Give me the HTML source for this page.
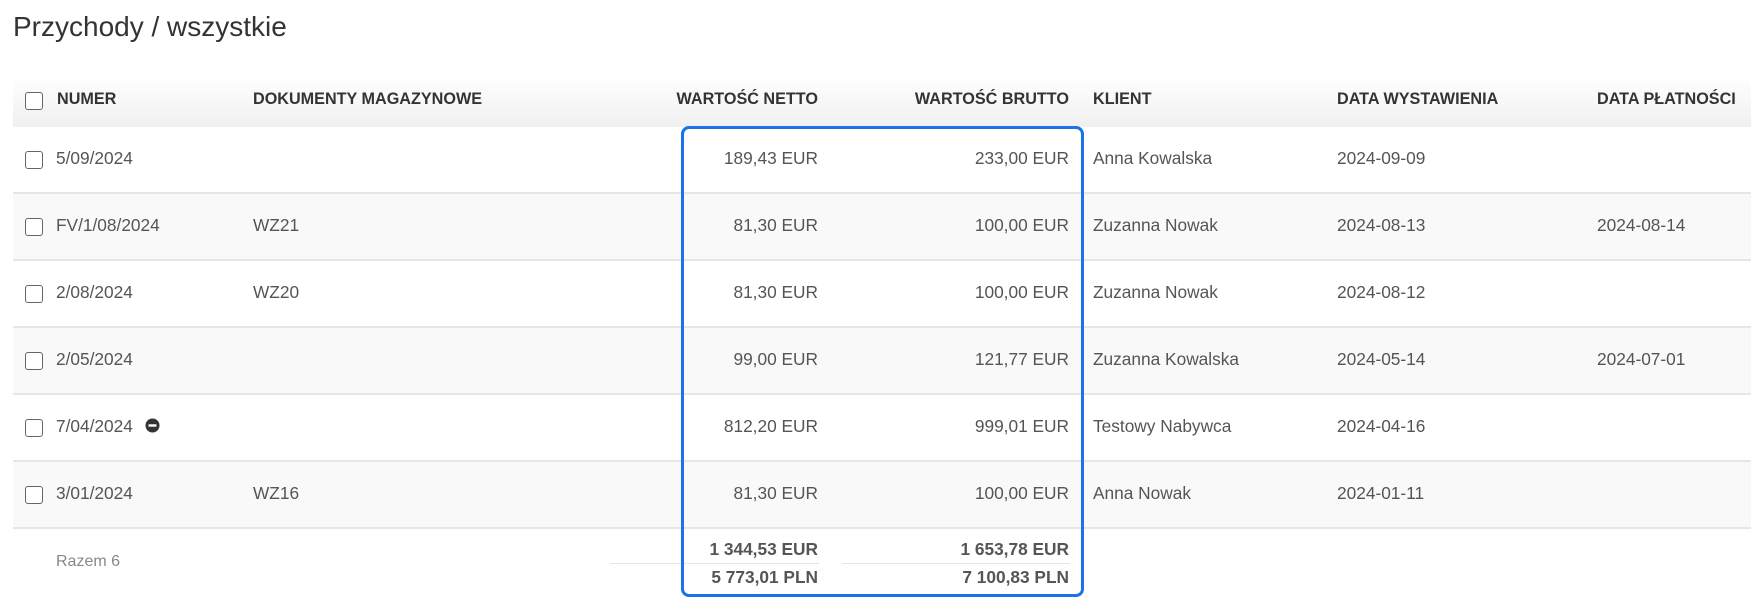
<!DOCTYPE html>
<html><head><meta charset="utf-8"><style>
*{margin:0;padding:0;box-sizing:border-box}
body{width:1751px;height:615px;background:#fff;font-family:"Liberation Sans",sans-serif;color:#555;position:relative;overflow:hidden}
.t{position:absolute;left:13px;top:11px;font-size:28px;color:#333}
.hd{position:absolute;left:13px;top:75px;width:1738px;height:52px;background:linear-gradient(#fff,#f0f0f0)}
.row{position:absolute;left:13px;width:1738px;height:67px;border-bottom:2px solid #e6e6e6}
.alt{background:#f9f9f9}
.c{position:absolute;font-size:17.3px;white-space:nowrap;margin-top:-1px}
.h{font-weight:bold;font-size:16.2px;color:#333}
.r{text-align:right}
.cb{position:absolute;width:18px;height:18px;border:1.5px solid #666;border-radius:3px;background:#fff}
.box{position:absolute;left:681px;top:126px;width:403px;height:471px;border:3px solid #1a73e8;border-radius:8px}
.b{font-weight:bold;color:#555}
</style></head><body>
<div class="t">Przychody / wszystkie</div>
<div class="hd"></div>
<div class="cb" style="left:25px;top:92px"></div>
<div class="c h" style="left:57px;top:91px">NUMER</div>
<div class="c h" style="left:253px;top:91px">DOKUMENTY MAGAZYNOWE</div>
<div class="c h r" style="right:933px;top:91px">WARTOŚĆ NETTO</div>
<div class="c h r" style="right:682px;top:91px">WARTOŚĆ BRUTTO</div>
<div class="c h" style="left:1093px;top:91px">KLIENT</div>
<div class="c h" style="left:1337px;top:91px">DATA WYSTAWIENIA</div>
<div class="c h" style="left:1597px;top:91px">DATA PŁATNOŚCI</div>

<div class="row" style="top:127px"></div>
<div class="row alt" style="top:194px"></div>
<div class="row" style="top:261px"></div>
<div class="row alt" style="top:328px"></div>
<div class="row" style="top:395px"></div>
<div class="row alt" style="top:462px"></div>

<div class="cb" style="left:25px;top:151px"></div><div class="c" style="left:56px;top:149px">5/09/2024</div>
<div class="c r" style="right:933px;top:149px">189,43 EUR</div><div class="c r" style="right:682px;top:149px">233,00 EUR</div>
<div class="c" style="left:1093px;top:149px">Anna Kowalska</div><div class="c" style="left:1337px;top:149px">2024-09-09</div>

<div class="cb" style="left:25px;top:218px"></div><div class="c" style="left:56px;top:216px">FV/1/08/2024</div><div class="c" style="left:253px;top:216px">WZ21</div>
<div class="c r" style="right:933px;top:216px">81,30 EUR</div><div class="c r" style="right:682px;top:216px">100,00 EUR</div>
<div class="c" style="left:1093px;top:216px">Zuzanna Nowak</div><div class="c" style="left:1337px;top:216px">2024-08-13</div><div class="c" style="left:1597px;top:216px">2024-08-14</div>

<div class="cb" style="left:25px;top:285px"></div><div class="c" style="left:56px;top:283px">2/08/2024</div><div class="c" style="left:253px;top:283px">WZ20</div>
<div class="c r" style="right:933px;top:283px">81,30 EUR</div><div class="c r" style="right:682px;top:283px">100,00 EUR</div>
<div class="c" style="left:1093px;top:283px">Zuzanna Nowak</div><div class="c" style="left:1337px;top:283px">2024-08-12</div>

<div class="cb" style="left:25px;top:352px"></div><div class="c" style="left:56px;top:350px">2/05/2024</div>
<div class="c r" style="right:933px;top:350px">99,00 EUR</div><div class="c r" style="right:682px;top:350px">121,77 EUR</div>
<div class="c" style="left:1093px;top:350px">Zuzanna Kowalska</div><div class="c" style="left:1337px;top:350px">2024-05-14</div><div class="c" style="left:1597px;top:350px">2024-07-01</div>

<div class="cb" style="left:25px;top:419px"></div><div class="c" style="left:56px;top:417px">7/04/2024</div>
<svg style="position:absolute;left:145px;top:418px" width="15" height="15"><circle cx="7.5" cy="7.5" r="7" fill="#333"/><rect x="3.5" y="6.3" width="8" height="2.4" fill="#fff"/></svg>
<div class="c r" style="right:933px;top:417px">812,20 EUR</div><div class="c r" style="right:682px;top:417px">999,01 EUR</div>
<div class="c" style="left:1093px;top:417px">Testowy Nabywca</div><div class="c" style="left:1337px;top:417px">2024-04-16</div>

<div class="cb" style="left:25px;top:486px"></div><div class="c" style="left:56px;top:484px">3/01/2024</div><div class="c" style="left:253px;top:484px">WZ16</div>
<div class="c r" style="right:933px;top:484px">81,30 EUR</div><div class="c r" style="right:682px;top:484px">100,00 EUR</div>
<div class="c" style="left:1093px;top:484px">Anna Nowak</div><div class="c" style="left:1337px;top:484px">2024-01-11</div>

<div class="c" style="left:56px;top:554px;color:#888;font-size:16px">Razem 6</div>
<div style="position:absolute;left:610px;top:563px;width:209px;height:1px;background:#e6e6e6"></div>
<div style="position:absolute;left:842px;top:563px;width:228px;height:1px;background:#e6e6e6"></div>
<div class="c r b" style="right:933px;top:540px">1 344,53 EUR</div><div class="c r b" style="right:682px;top:540px">1 653,78 EUR</div>
<div class="c r b" style="right:933px;top:568px">5 773,01 PLN</div><div class="c r b" style="right:682px;top:568px">7 100,83 PLN</div>
<div class="box"></div>
</body></html>
